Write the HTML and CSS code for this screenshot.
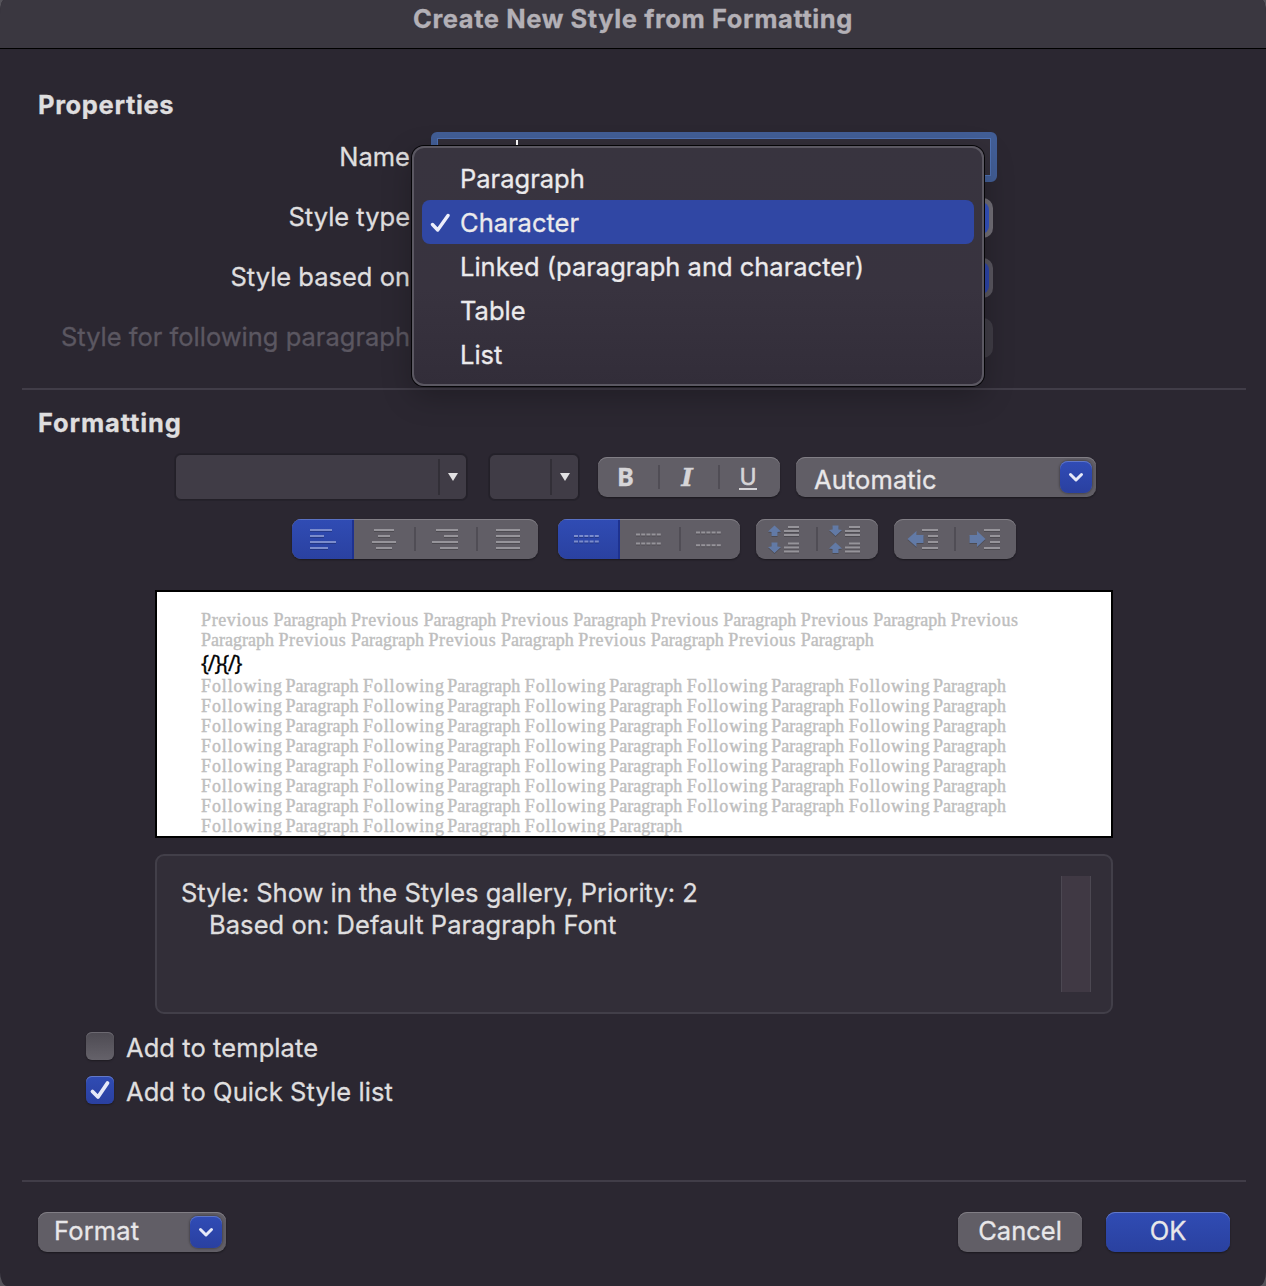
FILE: index.html
```
<!DOCTYPE html>
<html lang="en">
<head>
    <meta charset="UTF-8">
    <meta name="viewport" content="width=device-width, initial-scale=1.0">
    <title>Create New Style from Formatting</title>
    <link rel="stylesheet" href="styles.css">
</head>
<body>
    <div class="dialog">
        <header class="titlebar">Create New Style from Formatting</header>

        <section class="properties">
            <h2>Properties</h2>
            <div class="form-row">
                <label>Name</label>
                <div class="name-field"><span class="caret"></span></div>
            </div>
            <div class="form-row">
                <label>Style type</label>
                <div class="select active"><span class="select-arrow"></span></div>
                <ul class="menu">
                    <li>Paragraph</li>
                    <li class="selected">
                        <svg width="20" height="20" viewBox="0 0 20 20"><path d="M2.5 11.5 L7.7 17 L18 2.5" fill="none" stroke="#eceefa" stroke-width="3.4" stroke-linecap="round" stroke-linejoin="round"/></svg>
                        Character
                    </li>
                    <li>Linked (paragraph and character)</li>
                    <li>Table</li>
                    <li>List</li>
                </ul>
            </div>
            <div class="form-row">
                <label>Style based on</label>
                <div class="select"><span class="select-arrow"></span></div>
            </div>
            <div class="form-row disabled">
                <label>Style for following paragraph</label>
                <div class="select"></div>
            </div>
        </section>

        <div class="divider"></div>

        <section class="formatting">
            <h2>Formatting</h2>
            <div class="toolbar toolbar-font">
                <div class="combo combo-font"><span class="combo-arrow"><i></i></span></div>
                <div class="combo combo-size"><span class="combo-arrow"><i></i></span></div>
                <div class="segmented font-style">
                    <button class="bold">B</button>
                    <button class="italic">I</button>
                    <button class="underline"><span>U</span></button>
                </div>
                <button class="popup popup-color">
                    <span>Automatic</span>
                    <span class="arrow-box"><svg width="16" height="12" viewBox="0 0 16 12"><path d="M2.5 3.5 L8 9 L13.5 3.5" fill="none" stroke="#e6e9f8" stroke-width="3" stroke-linecap="round" stroke-linejoin="round"/></svg></span>
                </button>
            </div>

            <div class="toolbar toolbar-para">
                <div class="segmented align">
                    <button class="on"><svg width="28" height="24" viewBox="0 0 28 24"><path d="M1 3h22M1 9h14M1 15h26M1 21h18"/></svg></button>
                    <button><svg width="28" height="24" viewBox="0 0 28 24"><path d="M4 3h20M8 9h12M2 15h24M6 21h16"/></svg></button>
                    <button><svg width="28" height="24" viewBox="0 0 28 24"><path d="M4 3h22M12 9h14M0 15h26M8 21h18"/></svg></button>
                    <button><svg width="28" height="24" viewBox="0 0 28 24"><path d="M3 3h24M3 9h24M3 15h24M3 21h24"/></svg></button>
                </div>
                <div class="segmented spacing">
                    <button class="on"><svg class="dashed" width="26" height="24" viewBox="0 0 26 24"><path d="M0 9h26M0 14.5h26"/></svg></button>
                    <button><svg class="dashed" width="26" height="24" viewBox="0 0 26 24"><path d="M0 7.5h26M0 16.5h26"/></svg></button>
                    <button><svg class="dashed" width="26" height="24" viewBox="0 0 26 24"><path d="M0 5.5h26M0 18.2h26"/></svg></button>
                </div>
                <div class="segmented para-space">
                    <button>
                        <svg class="fine" width="32" height="28" viewBox="0 0 32 28">
                            <path class="arrow" d="M6.5 0.5 L13 6.5 L9.5 7 V11 H3.5 V7 L0 6.5 Z M6.5 28 L13 22 L9.5 21.5 V17.5 H3.5 V21.5 L0 22 Z"/>
                            <path d="M20 2h11M16 6h15M16 10h15M20 18.5h11M16 22.5h15M16 26.5h15"/>
                        </svg>
                    </button>
                    <button>
                        <svg class="fine" width="32" height="28" viewBox="0 0 32 28">
                            <path class="arrow" d="M6.5 11 L13 5 L9.5 4.5 V0.5 H3.5 V4.5 L0 5 Z M6.5 17.5 L13 23.5 L9.5 24 V28 H3.5 V24 L0 23.5 Z"/>
                            <path d="M20 2h11M16 6h15M16 10h15M20 18.5h11M16 22.5h15M16 26.5h15"/>
                        </svg>
                    </button>
                </div>
                <div class="segmented indent">
                    <button>
                        <svg width="32" height="24" viewBox="0 0 32 24">
                            <path class="arrow" d="M0.5 12 L9.5 4 V8 H16.5 V16 H9.5 V20 Z"/>
                            <path d="M15 3h16M21 9h10M21 15h10M15 21h16"/>
                        </svg>
                    </button>
                    <button>
                        <svg width="32" height="24" viewBox="0 0 32 24">
                            <path class="arrow" d="M16.5 12 L8 4 V8 H0.5 V16 H8 V20 Z"/>
                            <path d="M15 3h16M21 9h10M21 15h10M15 21h16"/>
                        </svg>
                    </button>
                </div>
            </div>

            <div class="preview">
                <p id="previous"></p>
                <p class="sample">{/}{/}</p>
                <p id="following"></p>
            </div>

            <div class="description">
                <div class="description-text">
                    <p>Style: Show in the Styles gallery, Priority: 2</p>
                    <p class="indented">Based on: Default Paragraph Font</p>
                </div>
                <div class="scrollbar"></div>
            </div>

            <div class="options">
                <label class="option"><span class="checkbox"></span><span class="option-text">Add to template</span></label>
                <label class="option">
                    <span class="checkbox checked"><svg width="28" height="28" viewBox="0 0 28 28"><path d="M6.5 15.5 L12 21 L21.5 7" fill="none" stroke="#e6e9f8" stroke-width="3.8" stroke-linecap="round" stroke-linejoin="round"/></svg></span>
                    <span class="option-text">Add to Quick Style list</span>
                </label>
            </div>
        </section>

        <div class="divider"></div>

        <footer class="actions">
            <button class="popup popup-format">
                <span>Format</span>
                <span class="arrow-box"><svg width="16" height="12" viewBox="0 0 16 12"><path d="M2.5 3.5 L8 9 L13.5 3.5" fill="none" stroke="#e6e9f8" stroke-width="3" stroke-linecap="round" stroke-linejoin="round"/></svg></span>
            </button>
            <button class="push">Cancel</button>
            <button class="push primary">OK</button>
        </footer>
    </div>

    <script>
        function fillPreview(id, word, count) {
            const pair = `<span>${word}</span> Paragraph `;
            document.getElementById(id).innerHTML = pair.repeat(count);
        }

        fillPreview('previous', 'Previous', 10);
        fillPreview('following', 'Following', 38);
    </script>
</body>
</html>
```
FILE: styles.css
```
* {
    box-sizing: border-box;
}
body {
    margin: 0;
    background-color: #55535a;
    font-family: Inter, "Liberation Sans", sans-serif;
    font-size: 25.5px;
    color: #dfdedf;
    -webkit-text-stroke: 0.3px currentColor;
    overflow: hidden;
}
h2, p, ul {
    margin: 0;
    padding: 0;
}
button {
    border: none;
    margin: 0;
    padding: 0;
    font: inherit;
    color: inherit;
    letter-spacing: inherit;
}
svg {
    display: block;
}
.dialog {
    width: 1266px;
    height: 1286px;
    background-color: #2b2731;
    border-radius: 4px 4px 7px 7px / 14px 14px 14px 14px;
    overflow: hidden;
}
.titlebar {
    height: 49px;
    line-height: 38px;
    background-color: #3a3740;
    border-bottom: 1px solid #000;
    text-align: center;
    font-weight: 700;
    letter-spacing: 0.58px;
    color: #b3b0b6;
}
h2 {
    height: 40px;
    line-height: 40px;
    font-size: 25.5px;
    font-weight: 700;
    letter-spacing: 0.65px;
    padding-left: 38px;
}
.divider {
    height: 2px;
    margin: 0 20px 0 22px;
    background-color: #413d48;
}

/* Properties */
.properties {
    padding: 36px 0 21px;
}
.properties h2 {
    margin-bottom: 2px;
}
.form-row {
    position: relative;
    display: flex;
    align-items: center;
    height: 60px;
}
.form-row label {
    width: 410px;
    padding-bottom: 2px;
    text-align: right;
    white-space: nowrap;
}
.form-row.disabled label {
    color: #5b5761;
}
.name-field {
    width: 566px;
    height: 50px;
    margin-left: 21px;
    border: 6px solid #425e96;
    border-radius: 6px;
    background-color: #322e38;
    box-shadow: inset 0 0 0 1px #4f72b4;
}
.caret {
    display: block;
    width: 2px;
    height: 32px;
    margin: 2px 0 0 79px;
    background-color: #fff;
}
.select {
    display: flex;
    justify-content: flex-end;
    width: 558px;
    height: 40px;
    margin: 2px 0 0 25px;
    padding: 4px;
    border-radius: 10px;
    background-color: #59565f;
}
.select.active {
    background-color: #716e76;
}
.disabled .select {
    background-color: #3f3c45;
}
.select-arrow {
    width: 32px;
    border-radius: 8px;
    background-color: #2c44a8;
}
.active .select-arrow {
    background-color: #3453c0;
}
.menu {
    position: absolute;
    left: 412px;
    top: -41px;
    z-index: 10;
    width: 572px;
    padding: 8px;
    list-style: none;
    border: 2px solid #5b5862;
    border-radius: 12px;
    background: linear-gradient(#38343f, #38333f 60%, #322d39);
    box-shadow: 0 0 0 1px #050507, 0 10px 30px rgba(0, 0, 0, 0.25);
    color: #ebeaec;
}
.menu li {
    position: relative;
    height: 44px;
    line-height: 45px;
    padding-left: 38px;
    border-radius: 8px;
}
.menu li.selected {
    background-color: #3047a4;
}
.menu svg {
    position: absolute;
    left: 8px;
    top: 13px;
}

/* Formatting */
.formatting {
    padding: 13px 0 76px;
}
.formatting h2 {
    letter-spacing: 0.85px;
}
.toolbar {
    display: flex;
}
.toolbar-font {
    align-items: center;
    height: 46px;
    margin: 11px 0 0 175px;
}
.toolbar-para {
    gap: 16px;
    margin: 19px 0 0 292px;
}
.combo {
    display: flex;
    justify-content: flex-end;
    height: 46px;
    border: 1px solid #232028;
    border-radius: 6px;
    background-color: #403c46;
    box-shadow: 0 0 0 1px #25222b;
}
.combo-font {
    width: 292px;
    margin-right: 22px;
}
.combo-size {
    width: 90px;
    margin-right: 19px;
}
.combo-arrow {
    display: flex;
    align-items: center;
    justify-content: center;
    width: 28px;
    margin: 4px 0;
    border-left: 2px solid #322f37;
}
.combo-arrow i {
    border: 5px solid transparent;
    border-top: 8px solid #e2e1e3;
    border-bottom: none;
}
.segmented {
    display: flex;
    height: 40px;
    border-radius: 9px;
    background-color: #615e66;
    box-shadow: inset 0 1px 0 #817e85, 0 1px 2px rgba(0, 0, 0, 0.4);
    overflow: hidden;
}
.segmented button {
    position: relative;
    display: flex;
    flex: 1 1 0;
    align-items: center;
    justify-content: center;
    background: none;
}
.segmented button + button::before {
    content: "";
    position: absolute;
    left: -1px;
    top: 8px;
    width: 2px;
    height: 24px;
    background-color: #504d55;
}
.segmented button.on {
    background: linear-gradient(#304cb4, #2a41a0);
    box-shadow: inset 0 1px 0 #5870c4, inset -2px 0 0 #1e3290;
}
.segmented button.on + button::before {
    display: none;
}
.segmented svg {
    fill: none;
    stroke: #96949a;
    stroke-width: 2;
    filter: drop-shadow(0 1.5px 0 rgba(0, 0, 0, 0.2));
}
.segmented .on svg {
    stroke: #7b8ccc;
}
.segmented .dashed {
    stroke-dasharray: 4 1.2;
}
.segmented .fine {
    stroke-width: 1.8;
}
.segmented .arrow {
    fill: #627aa6;
    stroke: none;
}
.font-style {
    width: 182px;
    margin-right: 16px;
    color: #d6d5d8;
    text-shadow: 0 2px 1px rgba(0, 0, 0, 0.35);
}
.font-style button {
    flex: 0 0 61px;
}
.font-style .bold {
    padding: 0 6px 2px 0;
    font-family: "Noto Sans", sans-serif;
    font-weight: 700;
    font-size: 25.5px;
}
.font-style .italic {
    flex-basis: 60px;
    padding: 1px 4px 0 0;
    font-family: "DejaVu Serif", serif;
    font-style: italic;
    font-weight: 700;
    font-size: 25px;
}
.font-style .underline {
    padding: 0 3px 0 0;
}
.font-style .underline span {
    height: 26px;
    line-height: 25px;
    padding: 0 0.5px;
    border-bottom: 2px solid #d6d5d8;
    font-family: "Noto Sans", sans-serif;
    font-size: 23.5px;
    -webkit-text-stroke-width: 0.6px;
}
.align {
    width: 246px;
    margin-right: 4px;
}
.spacing {
    width: 182px;
}
.spacing button {
    padding-right: 3px;
}
.spacing button.on {
    padding-right: 5px;
}
.para-space, .indent {
    width: 122px;
}
.para-space button {
    padding-right: 6px;
}
.indent button {
    flex: 0 0 61px;
    padding-right: 3px;
}
.indent button + button {
    padding-right: 1px;
}
.popup {
    display: flex;
    align-items: center;
    justify-content: space-between;
    height: 40px;
    border-radius: 9px;
    background-color: #615e66;
    box-shadow: inset 0 1px 0 #817e85, 0 1px 2px rgba(0, 0, 0, 0.4);
    color: #e8e7e9;
}
.popup-color {
    width: 300px;
    padding: 0 4px 0 18px;
}
.popup-color > span:first-child {
    padding-top: 5px;
    letter-spacing: 0.1px;
}
.popup-format {
    width: 188px;
    padding: 0 4px 0 16px;
    margin-right: auto;
}
.popup-format > span:first-child {
    padding-bottom: 3px;
    letter-spacing: 0.15px;
}
.arrow-box {
    display: flex;
    align-items: center;
    justify-content: center;
    width: 32px;
    height: 32px;
    border-radius: 8px;
    background: linear-gradient(#304cb6, #2a40a0);
    box-shadow: inset 0 1px 0 #5f76c8, 0 0 2px 1px rgba(0, 0, 0, 0.25);
}
.preview {
    width: 958px;
    height: 248px;
    margin: 31px 0 0 155px;
    padding: 18px 44px 0;
    border: 2px solid #000;
    background-color: #fff;
    font-family: "Liberation Serif", serif;
    font-size: 18px;
    line-height: 20px;
    color: #bebebe;
    -webkit-text-stroke-width: 0.4px;
    overflow: hidden;
}
#previous span {
    letter-spacing: 0.62px;
}
#following span {
    letter-spacing: 0.88px;
    margin-right: -2px;
}
.preview .sample {
    height: 26px;
    line-height: 27px;
    font-family: "Open Sans", sans-serif;
    font-size: 21px;
    letter-spacing: -1.1px;
    color: #000;
}
.description {
    display: flex;
    justify-content: space-between;
    width: 958px;
    height: 160px;
    margin: 16px 0 0 155px;
    padding: 20px;
    border: 2px solid #423f49;
    border-radius: 9px;
    background-color: #322e38;
}
.description-text {
    padding: 1px 0 0 4px;
    line-height: 32px;
}
.description .indented {
    padding-left: 28px;
    letter-spacing: 0.06px;
}
.scrollbar {
    width: 30px;
    height: 116px;
    border: 1px solid #4c4852;
    border-width: 0 1px;
    background-color: #403944;
}
.options {
    display: flex;
    flex-direction: column;
    gap: 16px;
    margin: 18px 0 0 86px;
}
.option {
    display: flex;
    align-items: center;
    gap: 12px;
    height: 28px;
    letter-spacing: 0.08px;
}
.option-text {
    padding-top: 2px;
}
.checkbox {
    width: 28px;
    height: 28px;
    border-radius: 6px;
    background: linear-gradient(#4d4a52, #65626a);
    box-shadow: inset 0 1px 0 #6c6971, 0 1px 2px rgba(0, 0, 0, 0.35);
}
.checkbox.checked {
    background: linear-gradient(#304cb4, #2a40a0);
    box-shadow: inset 0 1px 0 #6379c8, 0 1px 2px rgba(0, 0, 0, 0.35);
}

/* Footer */
.actions {
    display: flex;
    gap: 24px;
    padding: 30px 36px 0 38px;
}
.push {
    width: 124px;
    height: 40px;
    padding-bottom: 3px;
    border-radius: 9px;
    background-color: #615e66;
    box-shadow: inset 0 1px 0 #817e85, 0 1px 2px rgba(0, 0, 0, 0.4);
    color: #e8e7e9;
}
.push.primary {
    background: linear-gradient(#304cb4, #2a41a0);
    box-shadow: inset 0 1px 0 #6379c8, 0 1px 2px rgba(0, 0, 0, 0.4);
}
```
